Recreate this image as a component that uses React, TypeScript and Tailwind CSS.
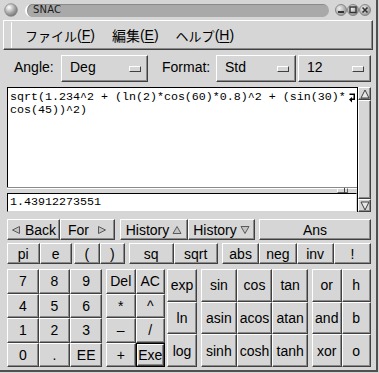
import React from "react";

const RAISED =
  "bg-[#d6d6d6] border border-t-white border-l-white border-b-[#404040] border-r-[#404040] shadow-[inset_-1px_-1px_0_#8a8a8a]";

function Btn({ children, className = "" }: { children?: React.ReactNode; className?: string }) {
  return (
    <div className={`flex items-center justify-center text-[14px] leading-none ${RAISED} ${className}`}>
      {children}
    </div>
  );
}

function Tri({ dir }: { dir: "l" | "r" | "u" | "d" }) {
  const pts = { l: "8.5,1.5 8.5,8.5 1.5,5", r: "1.5,1.5 1.5,8.5 8.5,5", u: "1,8.5 9,8.5 5,1.5", d: "1,1.5 9,1.5 5,8.5" }[dir];
  return (
    <svg width="10" height="10" viewBox="0 0 10 10" className="shrink-0">
      <polygon points={pts} fill="#c4c4c4" stroke="#5a5a5a" strokeWidth="1" />
    </svg>
  );
}

function Indicator() {
  return <div className="w-[12px] h-[6px] bg-[#d6d6d6] border border-t-white border-l-white border-b-[#404040] border-r-[#404040]" />;
}

function Combo({ label, className }: { label: string; className: string }) {
  return (
    <div className={`${RAISED} h-full flex items-center justify-between pl-[8px] pr-[6px] text-[14px] ${className}`}>
      <span className="-mt-[2px]">{label}</span>
      <Indicator />
    </div>
  );
}

function TitleBtn({ kind }: { kind: "min" | "max" | "close" }) {
  return (
    <svg width="12" height="12" viewBox="0 0 12 12">
      <defs>
        <radialGradient id={`g${kind}`} cx="0.35" cy="0.35" r="0.75">
          <stop offset="0" stopColor="#f0f0f0" />
          <stop offset="1" stopColor="#8a8a8a" />
        </radialGradient>
      </defs>
      <circle cx="6" cy="6" r="5.5" fill={`url(#g${kind})`} stroke="#7a7a7a" strokeWidth="0.8" />
      {kind === "min" && <rect x="3" y="7" width="6" height="2" fill="#333" />}
      {kind === "max" && <rect x="3" y="3" width="6" height="5.5" fill="none" stroke="#333" strokeWidth="1.4" />}
      {kind === "close" && <path d="M3.5 3.5l5 5M8.5 3.5l-5 5" stroke="#333" strokeWidth="1.6" />}
    </svg>
  );
}

export default function App() {
  const mono = "font-['Liberation_Mono','DejaVu_Sans_Mono',monospace] text-[11.67px] leading-[13px]";
  return (
    <div className="w-[379px] h-[373px] bg-[#d6d6d6] overflow-hidden font-['Liberation_Sans',Arial,sans-serif] text-black">
      <div className="w-[378px] h-[372px] border-r-2 border-b-2 border-r-[#505050] border-b-[#505050] flex flex-col">
        {/* Title bar */}
        <div className="h-[19px] flex items-center pl-[4px] pr-[5px] pt-[1px]">
          <svg width="14" height="14" viewBox="0 0 14 14">
            <defs>
              <radialGradient id="sph" cx="0.35" cy="0.3" r="0.8">
                <stop offset="0" stopColor="#ffffff" />
                <stop offset="0.6" stopColor="#a0a0a0" />
                <stop offset="1" stopColor="#6a6a6a" />
              </radialGradient>
            </defs>
            <circle cx="7" cy="7" r="6.3" fill="url(#sph)" stroke="#808080" strokeWidth="0.7" />
          </svg>
          <div className="ml-[7px] flex-1 h-[13px] rounded-full bg-[#a9a9a9] border-l-2 border-l-white shadow-[inset_1px_1px_0_#8a8a8a] flex items-center pl-[6px]">
            <span className="text-[10px] leading-none text-[#1a1a1a] font-['DejaVu_Sans',sans-serif] tracking-[0.2px]">SNAC</span>
          </div>
          <div className="ml-[6px] flex items-center gap-[0px]">
            <TitleBtn kind="min" />
            <TitleBtn kind="max" />
            <TitleBtn kind="close" />
          </div>
        </div>

        {/* Menu bar */}
        <div className={`mx-[3px] mt-[1px] h-[30px] flex items-center ${RAISED}`}>
          <div className="ml-[1px] w-[7px] h-[26px] bg-[radial-gradient(#8a8a8a_0.6px,transparent_0.7px)] bg-[length:2px_2px] border-r border-r-white" />
          <div className="flex items-center text-[14px] font-['Liberation_Sans','Noto_Sans_CJK_JP',sans-serif] leading-none">
            <span className="ml-[13px] font-['Noto_Sans_CJK_JP',sans-serif] text-[13px] tracking-[0px]">ファイル</span>
            <span>(<span className="underline underline-offset-2">F</span>)</span>
            <span className="ml-[17px] font-['Noto_Sans_CJK_JP',sans-serif] text-[14px]">編集</span>
            <span>(<span className="underline underline-offset-2">E</span>)</span>
            <span className="ml-[17px] font-['Noto_Sans_CJK_JP',sans-serif] text-[13px]">ヘルプ</span>
            <span>(<span className="underline underline-offset-2">H</span>)</span>
          </div>
        </div>

        {/* Content */}
        <div className="pl-[7px] pr-[5px] flex flex-col">
          {/* Angle/Format row */}
          <div className="mt-[5px] h-[27px] flex items-center text-[14px]">
            <span className="ml-[7px] w-[47px] -mt-[2px]">Angle:</span>
            <Combo label="Deg" className="w-[87px]" />
            <span className="ml-[14px] w-[54px] -mt-[2px]">Format:</span>
            <Combo label="Std" className="w-[80px]" />
            <Combo label="12" className="ml-[2px] w-[73px]" />
          </div>

          {/* Text area + scroll */}
          <div className="mt-[5px] h-[125px] flex">
            <div className="w-[350px] flex flex-col">
              <div className={`h-[100px] bg-white border-t border-l border-black pl-[2px] pt-[3px] ${mono} relative`}>
                <div className="whitespace-pre">sqrt(1.234^2 + (ln(2)*cos(60)*0.8)^2 + (sin(30)*</div>
                <div className="whitespace-pre">cos(45))^2)</div>
                <svg className="absolute right-[1px] top-[5px]" width="7" height="10" viewBox="0 0 7 10">
                  <path d="M0.5 0.5h5.5v6.5H3v2.5L0 6.5 3 4v1.5h1.5V2H0.5z" fill="black" />
                </svg>
              </div>
              <div className="h-[6px] relative border-t border-t-[#8a8a8a] bg-[#d6d6d6]">
                <div className="absolute left-0 right-0 top-0 h-px bg-white" />
                <div className="absolute left-[330px] top-[0px] w-[11px] h-[5px] bg-[#d6d6d6] border border-t-white border-l-white border-b-[#606060] border-r-[#606060]">
                  <div className="absolute left-[6px] top-[-1px] w-px h-[5px] bg-[#404040]" />
                </div>
              </div>
              <div className={`h-[19px] bg-white border border-t-black border-l-black border-b-[#d6d6d6] border-r-[#d6d6d6] pl-[2px] flex items-center ${mono}`}>
                1.43912273551
              </div>
            </div>
            <div className="w-[14px] flex flex-col border-l border-l-black bg-[#d6d6d6]">
              <div className={`h-[13px] flex items-center justify-center ${RAISED}`}>
                <svg width="10" height="10" viewBox="0 0 10 10">
                  <polygon points="1,9 9,9 5,1" fill="#e8e8e8" stroke="#404040" strokeWidth="1" />
                </svg>
              </div>
              <div className={`flex-1 ${RAISED}`} />
              <div className={`h-[13px] flex items-center justify-center ${RAISED}`}>
                <svg width="10" height="10" viewBox="0 0 10 10">
                  <polygon points="1,1 9,1 5,9" fill="#e8e8e8" stroke="#404040" strokeWidth="1" />
                </svg>
              </div>
            </div>
          </div>

          {/* Back / For / History / Ans */}
          <div className="mt-[7px] h-[21px] flex">
            <div className="w-[108px] flex">
              <Btn className="w-[53px] gap-[4px]"><Tri dir="l" /><span>Back</span></Btn>
              <Btn className="flex-1 gap-[8px]"><span>For</span><Tri dir="r" /></Btn>
            </div>
            <div className="ml-[5px] w-[135px] flex">
              <Btn className="w-[68px] gap-[3px]"><span>History</span><Tri dir="u" /></Btn>
              <Btn className="flex-1 gap-[3px]"><span>History</span><Tri dir="d" /></Btn>
            </div>
            <Btn className="ml-[4px] flex-1">Ans</Btn>
          </div>

          {/* pi row */}
          <div className="mt-[3px] h-[21px] flex">
            <div className="w-[65px] flex">
              <Btn className="flex-1">pi</Btn>
              <Btn className="flex-1">e</Btn>
            </div>
            <div className="ml-[2px] w-[51px] flex">
              <Btn className="flex-1">(</Btn>
              <Btn className="flex-1">)</Btn>
            </div>
            <div className="ml-[4px] w-[89px] flex">
              <Btn className="flex-1">sq</Btn>
              <Btn className="flex-1">sqrt</Btn>
            </div>
            <div className="ml-[4px] flex-1 flex">
              <Btn className="flex-1">abs</Btn>
              <Btn className="flex-1">neg</Btn>
              <Btn className="flex-1">inv</Btn>
              <Btn className="flex-1">!</Btn>
            </div>
          </div>

          {/* Keypad */}
          <div className="mt-[5px] h-[98px] flex">
            <div className="w-[95px] grid grid-cols-3 grid-rows-4">
              {["7", "8", "9", "4", "5", "6", "1", "2", "3", "0", ".", "EE"].map((k) => (
                <Btn key={k}>{k}</Btn>
              ))}
            </div>
            <div className="ml-[4px] w-[59px] grid grid-cols-2 grid-rows-4">
              <Btn>Del</Btn>
              <Btn>AC</Btn>
              <Btn>*</Btn>
              <Btn>^</Btn>
              <Btn>–</Btn>
              <Btn>/</Btn>
              <Btn>+</Btn>
              <div className="border border-black flex">
                <Btn className="flex-1">Exe</Btn>
              </div>
            </div>
            <div className="ml-[2px] w-[30px] grid grid-rows-3">
              <Btn>exp</Btn>
              <Btn>ln</Btn>
              <Btn>log</Btn>
            </div>
            <div className="ml-[4px] w-[107px] grid grid-cols-3 grid-rows-3">
              {["sin", "cos", "tan", "asin", "acos", "atan", "sinh", "cosh", "tanh"].map((k) => (
                <Btn key={k}>{k}</Btn>
              ))}
            </div>
            <div className="ml-[4px] flex-1 grid grid-cols-2 grid-rows-3">
              {["or", "h", "and", "b", "xor", "o"].map((k) => (
                <Btn key={k}>{k}</Btn>
              ))}
            </div>
          </div>
        </div>
      </div>
    </div>
  );
}
